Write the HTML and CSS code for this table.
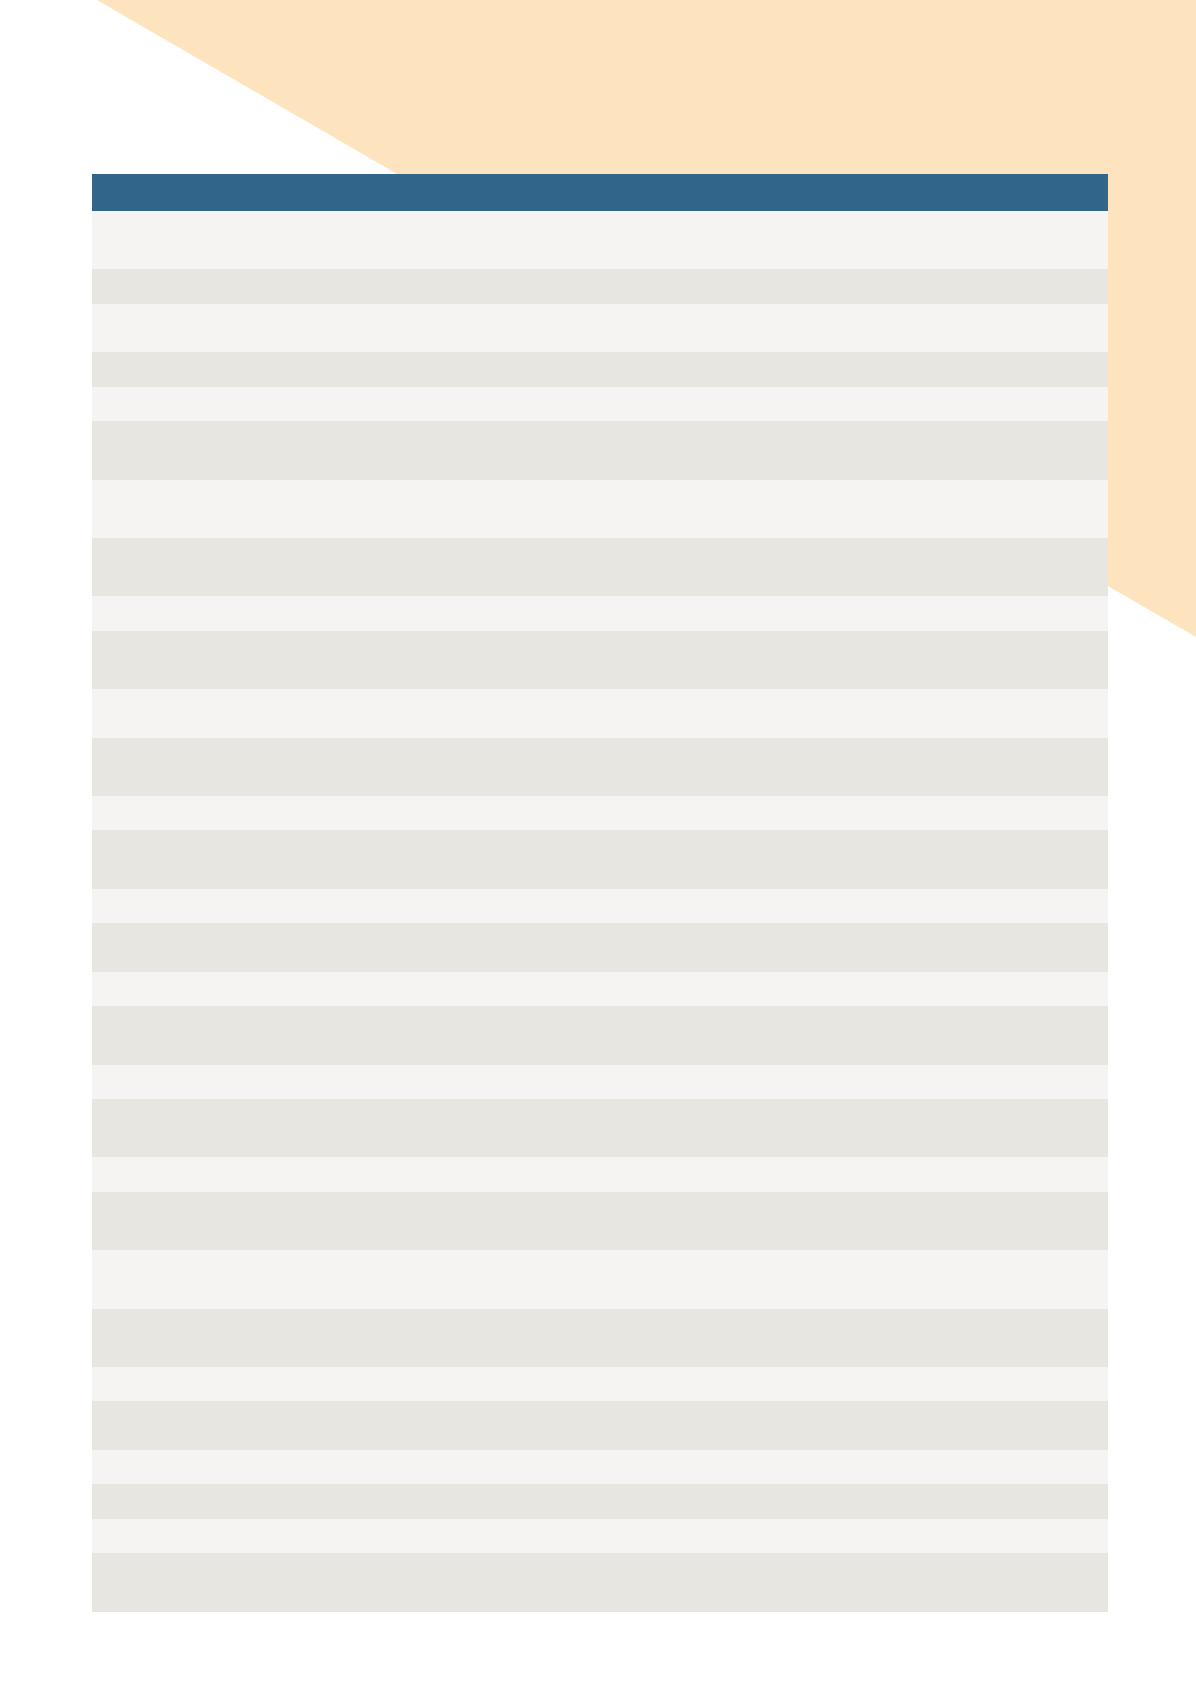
FILE: index.html
```html
<!DOCTYPE html>
<html lang="en">
<head>
<meta charset="utf-8">
<title>Table</title>
<link rel="stylesheet" href="styles.css">
</head>
<body>
<div class="page">
  <svg class="deco" viewBox="0 0 1196 1692" width="1196" height="1692" aria-hidden="true">
    <polygon points="97,0 1196,0 1196,637" fill="#FDE4BF"/>
  </svg>
  <div class="sheet">
    <div class="head"></div>
    <div class="row light t"></div>
    <div class="row dark s"></div>
    <div class="row light m"></div>
    <div class="row dark s"></div>
    <div class="row light s"></div>
    <div class="row dark t"></div>
    <div class="row light t"></div>
    <div class="row dark t"></div>
    <div class="row light s"></div>
    <div class="row dark t"></div>
    <div class="row light m"></div>
    <div class="row dark t"></div>
    <div class="row light s"></div>
    <div class="row dark t"></div>
    <div class="row light s"></div>
    <div class="row dark m"></div>
    <div class="row light s"></div>
    <div class="row dark t"></div>
    <div class="row light s"></div>
    <div class="row dark t"></div>
    <div class="row light s"></div>
    <div class="row dark t"></div>
    <div class="row light t"></div>
    <div class="row dark t"></div>
    <div class="row light s"></div>
    <div class="row dark m"></div>
    <div class="row light s"></div>
    <div class="row dark s"></div>
    <div class="row light s"></div>
    <div class="row dark t"></div>
  </div>
</div>
</body>
</html>
```
FILE: styles.css
```css
html, body {
  margin: 0;
  padding: 0;
  background: #ffffff;
  font-family: "Liberation Sans", Arial, sans-serif;
}

.page {
  position: relative;
  width: 1196px;
  height: 1692px;
  overflow: hidden;
}

.deco {
  position: absolute;
  top: 0;
  left: 0;
  z-index: 0;
}

.sheet {
  position: relative;
  z-index: 1;
  display: flex;
  flex-direction: column;
  width: 1016px;
  margin: 174px 0 0 92px;
}

.head {
  height: 37px;
  background: #31658A;
}

.row { flex: none; }
.light { background: #F5F4F2; }
.dark { background: #E7E6E1; }

.t { height: 58.3px; }
.m { height: 48.6px; }
.s { height: 34.5px; }
```
